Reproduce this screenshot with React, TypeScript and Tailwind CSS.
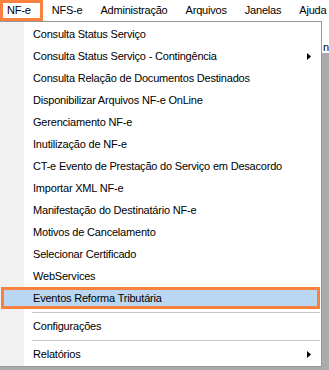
import React from 'react';

const menus = ['NF-e', 'NFS-e', 'Administração', 'Arquivos', 'Janelas', 'Ajuda'];

const items: { label: string; sub?: boolean }[] = [
  { label: 'Consulta Status Serviço' },
  { label: 'Consulta Status Serviço - Contingência', sub: true },
  { label: 'Consulta Relação de Documentos Destinados' },
  { label: 'Disponibilizar Arquivos NF-e OnLine' },
  { label: 'Gerenciamento NF-e' },
  { label: 'Inutilização de NF-e' },
  { label: 'CT-e Evento de Prestação do Serviço em Desacordo' },
  { label: 'Importar XML NF-e' },
  { label: 'Manifestação do Destinatário NF-e' },
  { label: 'Motivos de Cancelamento' },
  { label: 'Selecionar Certificado' },
  { label: 'WebServices' },
];

function Arrow() {
  return (
    <svg width="4" height="7" viewBox="0 0 4 7" className="absolute right-[10px] top-[8px]">
      <path d="M0 0 L4 3.5 L0 7 Z" fill="#000" />
    </svg>
  );
}

function Row({ label, sub }: { label: string; sub?: boolean }) {
  return (
    <div className="relative h-[22px] flex items-center pl-[33px]">
      {label}
      {sub && <Arrow />}
    </div>
  );
}

function Separator() {
  return (
    <div className="h-[6px] flex items-center pl-[32px] pr-[1px]">
      <div className="h-px w-full bg-[#c5c5c5]" />
    </div>
  );
}

export default function App() {
  return (
    <div
      className="w-[329px] h-[370px] overflow-hidden bg-[#ababab] text-[11px] tracking-[-0.2px] text-black"
      style={{ fontFamily: '"Liberation Sans", Arial, sans-serif' }}
    >
      {/* menu bar */}
      <div className="h-[21px] bg-white flex items-stretch">
        {menus.map((m, i) => (
          <div
            key={m}
            className={`flex items-center whitespace-nowrap ${
              i === 0 ? 'border-[3px] border-[#f7813f] pl-[4px] pr-[9px] h-[21px]' : 'px-[9px]'
            }`}
          >
            {m}
          </div>
        ))}
      </div>

      <div className="flex">
        {/* dropdown */}
        <div className="w-[324px] border-r border-b border-t border-[#979797] bg-[linear-gradient(to_right,#f1f1f1_24px,#ffffff_24px)] pt-px pb-px">
          {items.map((it) => (
            <Row key={it.label} {...it} />
          ))}
          <div className="h-[22px] mx-[1px] border-[3px] border-[#f7813f] bg-[#b9d7f3] flex items-center pl-[29px]">
            Eventos Reforma Tributária
          </div>
          <Separator />
          <Row label="Configurações" />
          <Separator />
          <Row label="Relatórios" sub />
        </div>

        {/* window behind */}
        <div className="flex-1 flex flex-col">
          <div className="h-[21px] bg-white" />
          <div className="h-[11px] bg-white pl-[1px] leading-[11px]">n</div>
        </div>
      </div>
    </div>
  );
}
